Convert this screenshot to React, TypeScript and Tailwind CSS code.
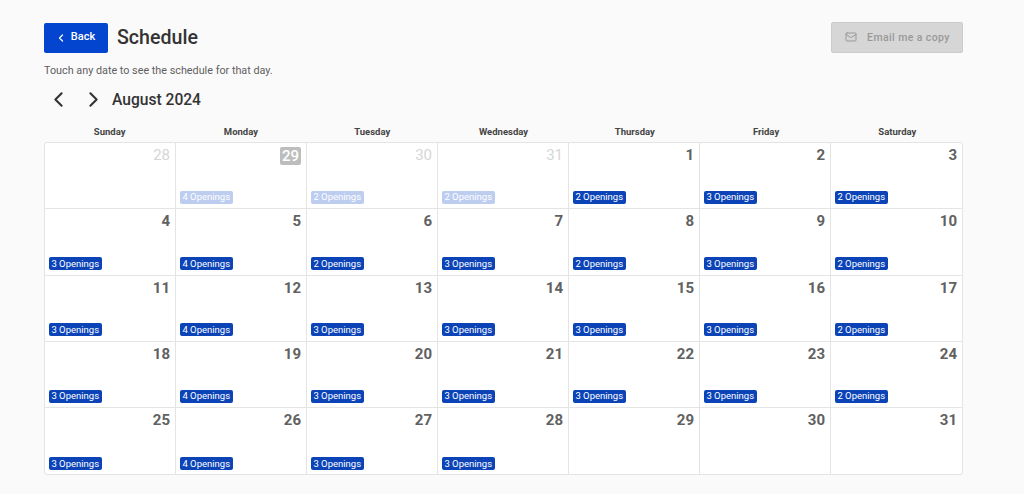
import { ChevronLeft, ChevronRight, Mail } from 'lucide-react'

interface Day {
  date: number
  openings?: number
  past?: boolean
  today?: boolean
}

const dayNames = ['Sunday', 'Monday', 'Tuesday', 'Wednesday', 'Thursday', 'Friday', 'Saturday']

const days: Day[] = [
  { date: 28, past: true },
  { date: 29, openings: 4, past: true, today: true },
  { date: 30, openings: 2, past: true },
  { date: 31, openings: 2, past: true },
  { date: 1, openings: 2 },
  { date: 2, openings: 3 },
  { date: 3, openings: 2 },
  { date: 4, openings: 3 },
  { date: 5, openings: 4 },
  { date: 6, openings: 2 },
  { date: 7, openings: 3 },
  { date: 8, openings: 2 },
  { date: 9, openings: 3 },
  { date: 10, openings: 2 },
  { date: 11, openings: 3 },
  { date: 12, openings: 4 },
  { date: 13, openings: 3 },
  { date: 14, openings: 3 },
  { date: 15, openings: 3 },
  { date: 16, openings: 3 },
  { date: 17, openings: 2 },
  { date: 18, openings: 3 },
  { date: 19, openings: 4 },
  { date: 20, openings: 3 },
  { date: 21, openings: 3 },
  { date: 22, openings: 3 },
  { date: 23, openings: 3 },
  { date: 24, openings: 2 },
  { date: 25, openings: 3 },
  { date: 26, openings: 4 },
  { date: 27, openings: 3 },
  { date: 28, openings: 3 },
  { date: 29 },
  { date: 30 },
  { date: 31 },
]

function DayCell({ day, index }: { day: Day; index: number }) {
  const lastCol = index % 7 === 6
  const lastRow = index >= 28
  return (
    <div
      className={`flex h-[66.3px] flex-col justify-between pb-[4.6px] pl-[4px] pr-[5px] pt-[4px] ${
        lastCol ? '' : 'border-r border-[#e4e4e4]'
      } ${lastRow ? 'h-[65.6px]' : 'border-b border-[#e4e4e4]'}`}
    >
      <div className="flex justify-end">
        {day.today ? (
          <span className="flex h-[18px] w-[21px] items-center justify-center rounded-[2px] bg-[#bdbdbd] text-[15px] font-medium leading-none text-white">
            {day.date}
          </span>
        ) : (
          <span
            className={`h-[17px] text-[15px] leading-[16px] ${
              day.past ? 'font-normal text-[#d6d6d6]' : 'font-bold text-[#616161]'
            }`}
          >
            {day.date}
          </span>
        )}
      </div>
      {day.openings ? (
        <div className="flex">
          <span
            className={`flex h-[13px] w-[52.5px] items-center justify-center rounded-[2px] text-[9.5px] leading-none text-white ${
              day.past ? 'bg-[#bccdf0]' : 'bg-[#0c44b8]'
            }`}
          >
            {day.openings} Openings
          </span>
        </div>
      ) : null}
    </div>
  )
}

export default function App() {
  return (
    <div className="h-[494px] w-[1024px] overflow-hidden bg-[#fafafa] px-[44px] pt-[22px] font-['Roboto',sans-serif]">
      <div className="flex h-[31px] w-[919px] items-center justify-between">
        <div className="flex items-center gap-[9px]">
          <button className="flex h-[30px] w-[64px] items-center justify-center gap-[4px] rounded-[2px] bg-[#0445cf] pr-[2px] text-[11px] font-medium text-white">
            <ChevronLeft size={12} strokeWidth={2.5} />
            Back
          </button>
          <h1 className="text-[19.6px] font-medium leading-[30px] text-[#333333]">Schedule</h1>
        </div>
        <button className="flex h-[31px] w-[132px] items-center justify-center gap-[10px] rounded-[2px] border border-[#cbcbcb] bg-[#d6d6d6] pl-[1px] text-[10.5px] font-medium tracking-[0.4px] text-[#999999]">
          <Mail size={12} className="-mt-[1px]" />
          Email me a copy
        </button>
      </div>
      <p className="mt-[11px] text-[10.8px] leading-[14px] text-[#5f5f5f]">
        Touch any date to see the schedule for that day.
      </p>
      <div className="mt-[10px] flex h-[24px] items-center pl-[1.5px]">
        <ChevronLeft size={25} strokeWidth={2} className="-mt-[1px] text-[#333333]" />
        <ChevronRight size={25} strokeWidth={2} className="-mt-[1px] ml-[10px] text-[#333333]" />
        <span className="ml-[6.5px] mt-[1px] text-[15.6px] font-medium text-[#333333]">August 2024</span>
      </div>
      <div className="mt-[12px] grid h-[18px] w-[919px] grid-cols-7">
        {dayNames.map((name) => (
          <div key={name} className="text-center text-[9.5px] font-bold leading-[16px] text-[#444444]">
            {name}
          </div>
        ))}
      </div>
      <div className="grid w-[919px] grid-cols-7 overflow-hidden rounded-[3px] border border-[#e4e4e4] bg-white">
        {days.map((day, i) => (
          <DayCell key={i} day={day} index={i} />
        ))}
      </div>
    </div>
  )
}
